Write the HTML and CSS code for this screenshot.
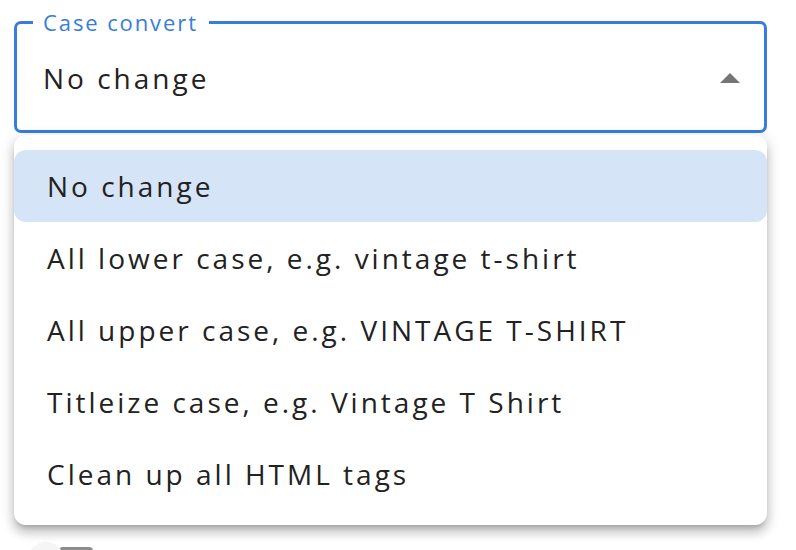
FILE: index.html
```html
<!DOCTYPE html>
<html>
<head>
<meta charset="utf-8">
<link rel="stylesheet" href="styles.css">
</head>
<body>
<div class="page">
  <div class="field">
    <span class="label">Case convert</span>
    <span class="value">No change</span>
    <svg class="arrow" width="20" height="10" viewBox="0 0 20 10"><path d="M0 10 L10 0 L20 10 Z" fill="#757575"/></svg>
  </div>
  <ul class="menu">
    <li class="item selected">No change</li>
    <li class="item">All lower case, e.g. vintage t-shirt</li>
    <li class="item">All upper case, e.g. VINTAGE T-SHIRT</li>
    <li class="item">Titleize case, e.g. Vintage T Shirt</li>
    <li class="item">Clean up all HTML tags</li>
  </ul>
  <div class="below">
    <span class="below-circle"></span>
    <span class="below-box"></span>
  </div>
</div>
</body>
</html>
```
FILE: styles.css
```css
html, body {
  margin: 0;
  padding: 0;
  background: #ffffff;
  width: 796px;
  height: 550px;
  overflow: hidden;
}
body {
  font-family: "Open Sans", "Liberation Sans", sans-serif;
  color: #222222;
}
.page {
  padding: 21px 29px 0 14px;
}
.field {
  position: relative;
  border: 3px solid #387ddc;
  border-radius: 7px;
  height: 106px;
  display: flex;
  align-items: center;
  justify-content: space-between;
  padding: 0 24px 0 26px;
}
.label {
  position: absolute;
  left: 16px;
  top: -17px;
  padding: 0 11px 0 10px;
  background: #ffffff;
  color: #387ddc;
  font-size: 22px;
  line-height: 30px;
  letter-spacing: 1.9px;
}
.value {
  font-size: 28px;
  letter-spacing: 3px;
  color: #222222;
  margin-top: 2px;
}
.arrow {
  margin-top: 2px;
}
.menu {
  list-style: none;
  margin: 2px 0 0 0;
  padding: 15px 0;
  background: #ffffff;
  border-radius: 12px;
  box-shadow: 0 5px 5px -3px rgba(0,0,0,0.2), 0 8px 10px 1px rgba(0,0,0,0.14), 0 3px 14px 2px rgba(0,0,0,0.12);
  position: relative;
  z-index: 2;
}
.item {
  height: 72px;
  display: flex;
  align-items: center;
  padding-left: 33px;
  font-size: 28px;
  letter-spacing: 3px;
  color: #222222;
}
.item.selected {
  background: #d6e4f7;
  border-radius: 12px;
}
.below {
  display: flex;
  align-items: flex-start;
  margin-top: 17px;
  padding-left: 14px;
  height: 8px;
  overflow: hidden;
}
.below-circle {
  flex: none;
  width: 36px;
  height: 36px;
  border-radius: 50%;
  background: #f5f5f5;
  position: relative;
  z-index: 1;
}
.below-box {
  flex: none;
  width: 34px;
  height: 30px;
  border-radius: 4px;
  background: #8c8c8c;
  margin-left: -5px;
  margin-top: 5px;
}
```
